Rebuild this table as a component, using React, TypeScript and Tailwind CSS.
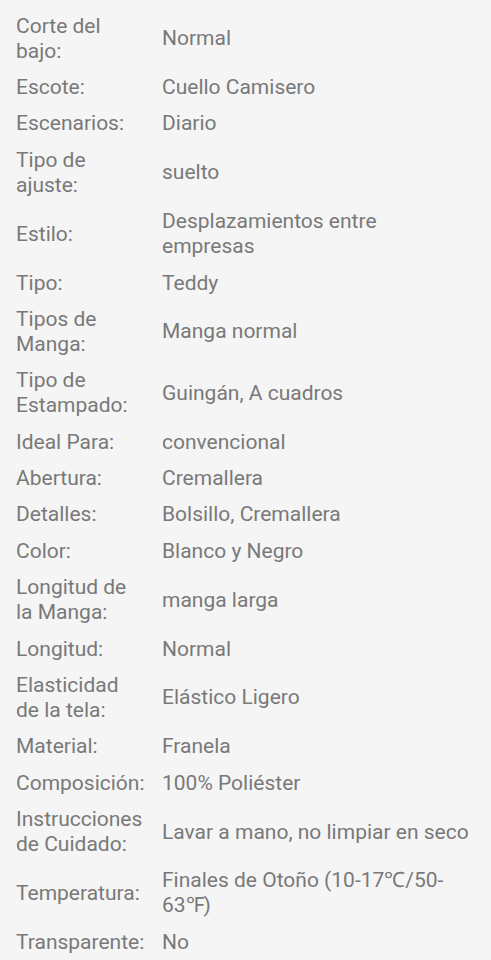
const specs: [string, string][] = [
  ["Corte del bajo:", "Normal"],
  ["Escote:", "Cuello Camisero"],
  ["Escenarios:", "Diario"],
  ["Tipo de ajuste:", "suelto"],
  ["Estilo:", "Desplazamientos entre empresas"],
  ["Tipo:", "Teddy"],
  ["Tipos de Manga:", "Manga normal"],
  ["Tipo de Estampado:", "Guingán, A cuadros"],
  ["Ideal Para:", "convencional"],
  ["Abertura:", "Cremallera"],
  ["Detalles:", "Bolsillo, Cremallera"],
  ["Color:", "Blanco y Negro"],
  ["Longitud de la Manga:", "manga larga"],
  ["Longitud:", "Normal"],
  ["Elasticidad de la tela:", "Elástico Ligero"],
  ["Material:", "Franela"],
  ["Composición:", "100% Poliéster"],
  ["Instrucciones de Cuidado:", "Lavar a mano, no limpiar en seco"],
  ["Temperatura:", "Finales de Otoño (10-17℃/50-63℉)"],
  ["Transparente:", "No"],
];

export default function App() {
  return (
    <div className="min-h-[960px] bg-[#f5f5f5] pt-[8px] pl-4 pr-[19px] font-['Roboto',sans-serif] text-[21px] leading-[25px] text-[#797979]">
      {specs.map(([label, value]) => (
        <div key={label} className="flex items-center gap-4 py-[5.7px]">
          <div className="w-[130px] shrink-0">{label}</div>
          <div className="flex-1">{value}</div>
        </div>
      ))}
    </div>
  );
}
